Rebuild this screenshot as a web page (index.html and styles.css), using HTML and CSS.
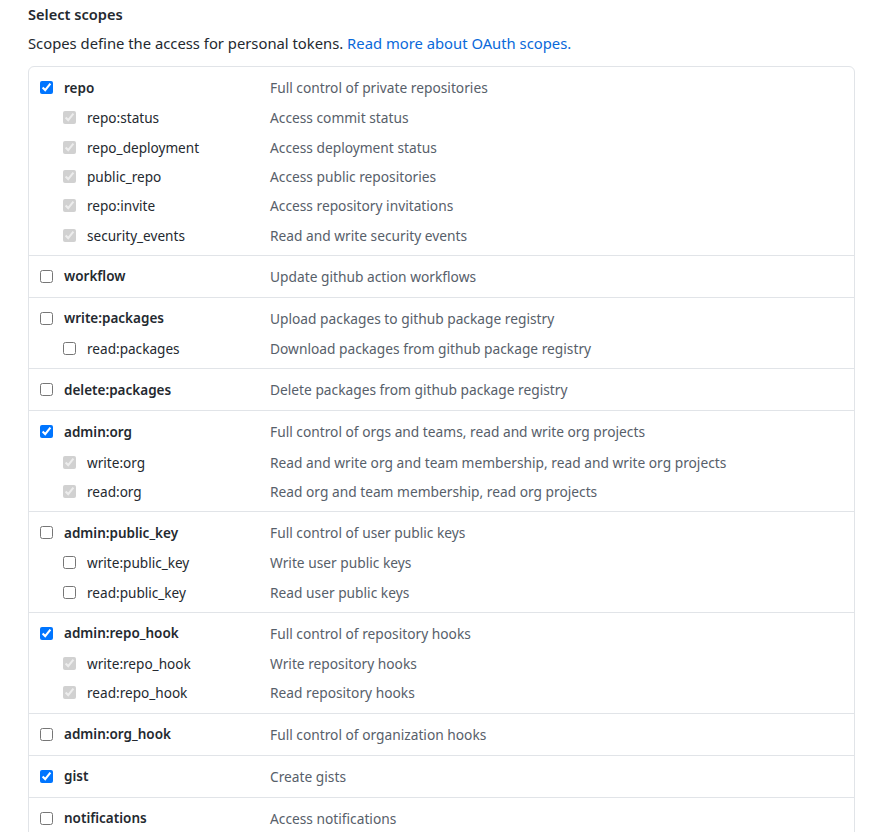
FILE: index.html
```html
<!DOCTYPE html>
<html>
<head>
<meta charset="utf-8">
<link rel="stylesheet" href="styles.css">
</head>
<body>
<div class="page">
  <h3 class="title">Select scopes</h3>
  <p class="note">Scopes define the access for personal tokens. <a class="link" href="#">Read more about OAuth scopes.</a></p>
  <div class="scopes">
    <div class="group">
      <div class="row top"><label class="name"><input type="checkbox" checked>repo</label><span class="desc">Full control of private repositories</span></div>
      <div class="row sub"><label class="name"><input type="checkbox" checked disabled>repo:status</label><span class="desc">Access commit status</span></div>
      <div class="row sub"><label class="name"><input type="checkbox" checked disabled>repo_deployment</label><span class="desc">Access deployment status</span></div>
      <div class="row sub"><label class="name"><input type="checkbox" checked disabled>public_repo</label><span class="desc">Access public repositories</span></div>
      <div class="row sub"><label class="name"><input type="checkbox" checked disabled>repo:invite</label><span class="desc">Access repository invitations</span></div>
      <div class="row sub"><label class="name"><input type="checkbox" checked disabled>security_events</label><span class="desc">Read and write security events</span></div>
    </div>
    <div class="group">
      <div class="row top"><label class="name"><input type="checkbox">workflow</label><span class="desc">Update github action workflows</span></div>
    </div>
    <div class="group">
      <div class="row top"><label class="name"><input type="checkbox">write:packages</label><span class="desc">Upload packages to github package registry</span></div>
      <div class="row sub"><label class="name"><input type="checkbox">read:packages</label><span class="desc">Download packages from github package registry</span></div>
    </div>
    <div class="group">
      <div class="row top"><label class="name"><input type="checkbox">delete:packages</label><span class="desc">Delete packages from github package registry</span></div>
    </div>
    <div class="group">
      <div class="row top"><label class="name"><input type="checkbox" checked>admin:org</label><span class="desc">Full control of orgs and teams, read and write org projects</span></div>
      <div class="row sub"><label class="name"><input type="checkbox" checked disabled>write:org</label><span class="desc">Read and write org and team membership, read and write org projects</span></div>
      <div class="row sub"><label class="name"><input type="checkbox" checked disabled>read:org</label><span class="desc">Read org and team membership, read org projects</span></div>
    </div>
    <div class="group">
      <div class="row top"><label class="name"><input type="checkbox">admin:public_key</label><span class="desc">Full control of user public keys</span></div>
      <div class="row sub"><label class="name"><input type="checkbox">write:public_key</label><span class="desc">Write user public keys</span></div>
      <div class="row sub"><label class="name"><input type="checkbox">read:public_key</label><span class="desc">Read user public keys</span></div>
    </div>
    <div class="group">
      <div class="row top"><label class="name"><input type="checkbox" checked>admin:repo_hook</label><span class="desc">Full control of repository hooks</span></div>
      <div class="row sub"><label class="name"><input type="checkbox" checked disabled>write:repo_hook</label><span class="desc">Write repository hooks</span></div>
      <div class="row sub"><label class="name"><input type="checkbox" checked disabled>read:repo_hook</label><span class="desc">Read repository hooks</span></div>
    </div>
    <div class="group">
      <div class="row top"><label class="name"><input type="checkbox">admin:org_hook</label><span class="desc">Full control of organization hooks</span></div>
    </div>
    <div class="group">
      <div class="row top"><label class="name"><input type="checkbox" checked>gist</label><span class="desc">Create gists</span></div>
    </div>
    <div class="group">
      <div class="row top"><label class="name"><input type="checkbox">notifications</label><span class="desc">Access notifications</span></div>
    </div>
  </div>
</div>
</body>
</html>
```
FILE: styles.css
```css
html, body {
  margin: 0;
  padding: 0;
  background: #ffffff;
}
body {
  font-family: "Noto Sans", "Open Sans", "Liberation Sans", sans-serif;
  font-size: 14px;
  color: #24292f;
}
.page {
  padding: 4px 21px 0 28px;
}
.title {
  margin: 0;
  font-size: 14.6px;
  font-weight: 600;
  line-height: 21px;
}
.note {
  margin: 8px 0 12px;
  font-size: 14.8px;
  line-height: 21px;
  color: #24292f;
}
.link {
  color: #0969da;
  text-decoration: none;
}
.scopes {
  border: 1px solid #e1e4e8;
  border-radius: 6px;
}
.group {
  padding: 5px 11px;
}
.group + .group {
  border-top: 1px solid #e1e4e8;
}
.row {
  display: grid;
  grid-template-columns: 230px 1fr;
  align-items: center;
  height: 29.4px;
}
.row.top {
  height: 31px;
}
.name {
  display: flex;
  align-items: center;
  gap: 11px;
  font-size: 13.6px;
}
.top .name {
  font-weight: 600;
  font-size: 13.5px;
}
.sub .name {
  padding-left: 23px;
}
.name input {
  margin: 0;
  width: 13px;
  height: 13px;
}
.desc {
  color: #57606a;
  font-size: 13.75px;
}
```
